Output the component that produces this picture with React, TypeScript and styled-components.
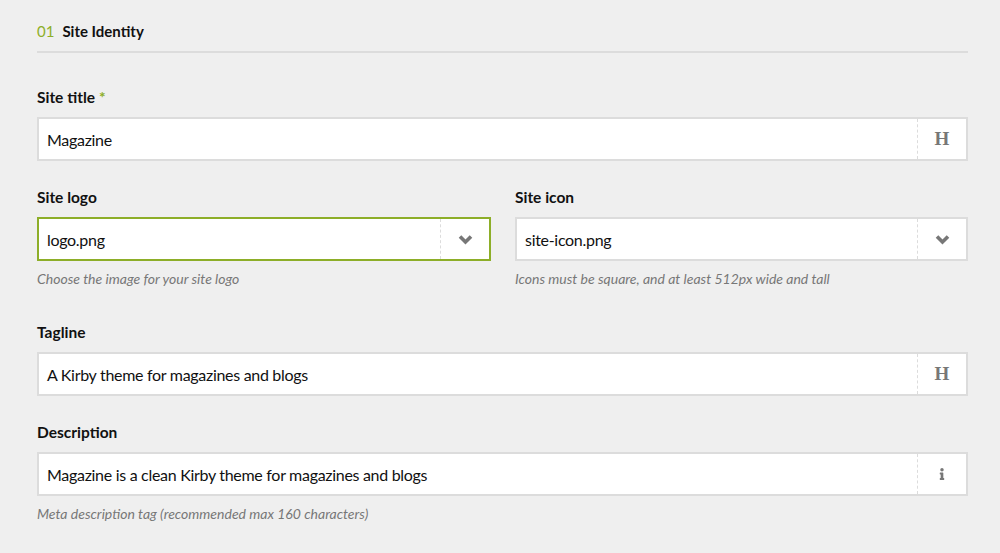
import React from 'react';
import styled, {createGlobalStyle} from 'styled-components';
import {FaInfo} from 'react-icons/fa';

const GlobalStyle = createGlobalStyle`
	body {
		margin: 0;
		background: #efefef;
		font-family: Lato, "Open Sans", sans-serif;
		color: #222;
	}
`;

const Page = styled.div`
	width: 931px;
	padding: 21px 0 0 37px;
`;

const Heading = styled.h2`
	margin: 0 0 34px;
	padding-bottom: 10px;
	border-bottom: 2px solid #dcdcdc;
	font-size: 15px;
	line-height: 20px;
	font-weight: 700;
	color: #111;
`;

const Number = styled.span`
	color: #8dae28;
	font-weight: 400;
	margin-right: 8px;
`;

const Row = styled.div`
	display: grid;
	grid-template-columns: 454px 1fr;
	column-gap: 24px;
`;

const Field = styled.div<{$help?: boolean}>`
	margin-bottom: ${p => (p.$help ? '33px' : '26px')};
`;

const Label = styled.label`
	display: block;
	font-size: 15.5px;
	line-height: 20px;
	font-weight: 700;
	color: #111;
	margin-bottom: 10px;
`;

const Required = styled.span`
	color: #8dae28;
	margin-left: 4px;
`;

const InputBox = styled.div<{$focus?: boolean}>`
	display: flex;
	height: 44px;
	box-sizing: border-box;
	background: #fff;
	border: 2px solid ${p => (p.$focus ? '#8dae28' : '#dcdcdc')};
`;

const Value = styled.div`
	flex: 1;
	display: flex;
	align-items: center;
	padding-left: 8px;
	font-size: 16px;
	letter-spacing: -0.3px;
	color: #111;
`;

const IconCell = styled.div`
	width: 48px;
	flex: none;
	display: flex;
	align-items: center;
	justify-content: center;
	border-left: 1px dashed #dcdcdc;
	color: #777;
`;

const Letter = styled.span`
	font-family: "Liberation Serif", serif;
	font-size: 19px;
	font-weight: 700;
	color: #777;
`;

const Help = styled.div`
	margin-top: 8px;
	font-size: 14px;
	line-height: 20px;
	font-style: italic;
	color: #777;
`;

const Chevron = () => (
	<svg width="15" height="11" viewBox="0 0 15 11">
		<polyline points="2,2.5 7.5,8 13,2.5" fill="none" stroke="#777" strokeWidth="3.6"/>
	</svg>
);

type FieldProps = {
	label: string;
	value: string;
	icon: React.ReactNode;
	help?: string;
	required?: boolean;
	focus?: boolean;
};

function TextField({label, value, icon, help, required, focus}: FieldProps) {
	return (
		<Field $help={!!help}>
			<Label>
				{label}
				{required && <Required>*</Required>}
			</Label>
			<InputBox $focus={focus}>
				<Value>{value}</Value>
				<IconCell>{icon}</IconCell>
			</InputBox>
			{help && <Help>{help}</Help>}
		</Field>
	);
}

export default function App() {
	return (
		<Page>
			<GlobalStyle/>
			<Heading><Number>01</Number>Site Identity</Heading>
			<TextField label="Site title" value="Magazine" required icon={<Letter>H</Letter>}/>
			<Row>
				<TextField label="Site logo" value="logo.png" focus icon={<Chevron/>}
					help="Choose the image for your site logo"/>
				<TextField label="Site icon" value="site-icon.png" icon={<Chevron/>}
					help="Icons must be square, and at least 512px wide and tall"/>
			</Row>
			<TextField label="Tagline" value="A Kirby theme for magazines and blogs" icon={<Letter>H</Letter>}/>
			<TextField label="Description" value="Magazine is a clean Kirby theme for magazines and blogs"
				icon={<FaInfo size={12}/>} help="Meta description tag (recommended max 160 characters)"/>
		</Page>
	);
}
